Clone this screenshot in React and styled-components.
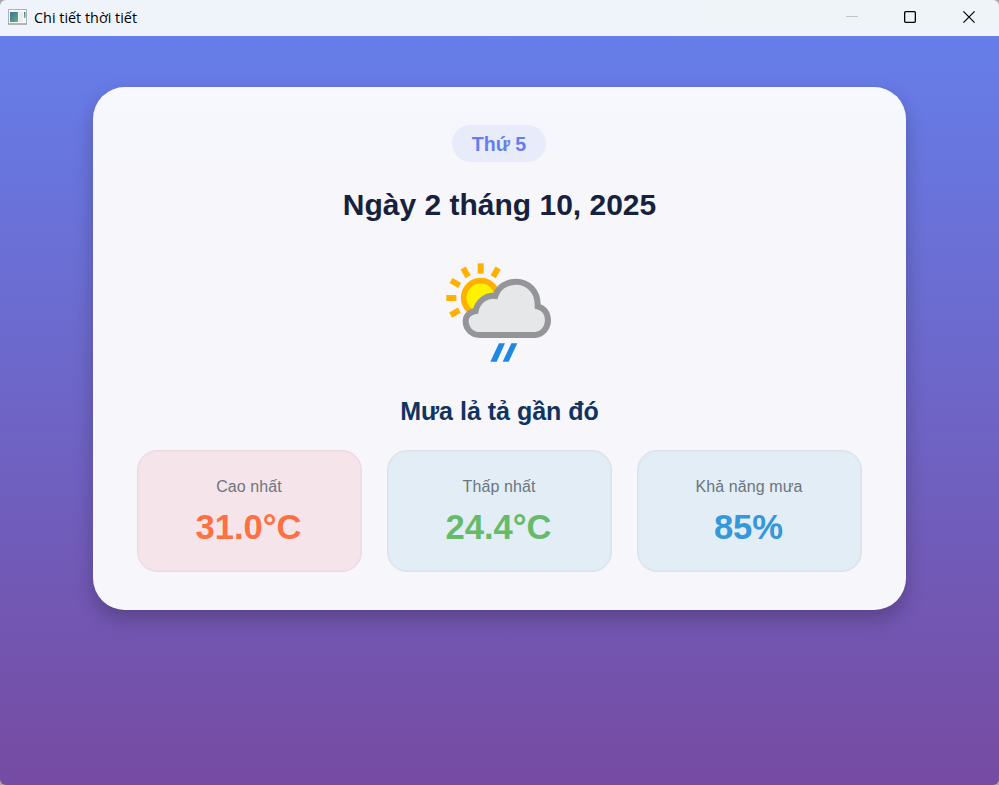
import React from "react";
import styled, { createGlobalStyle } from "styled-components";

const GlobalStyle = createGlobalStyle`
  * { box-sizing: border-box; }
  html, body { margin: 0; background: #a9a9ad; }
`;

const Window = styled.div`
  width: 999px;
  height: 785px;
  display: flex;
  flex-direction: column;
  overflow: hidden;
  border-radius: 6px;
  font-family: "Liberation Sans", Arial, sans-serif;
`;

const TitleBar = styled.header`
  height: 36px;
  flex: none;
  display: flex;
  align-items: center;
  padding-left: 8px;
  background: linear-gradient(90deg, #eff3fb, #eef4f8);
`;

const Title = styled.span`
  flex: 1;
  margin: -1px 0 0 7px;
  font: 14.4px/20px "Open Sans", "Noto Sans", sans-serif;
  color: #000;
`;

const WindowButton = styled.button`
  width: ${(p) => p.$width || 58}px;
  height: 34px;
  margin-bottom: 2px;
  padding: 0;
  border: 0;
  background: none;
  display: grid;
  place-items: center;
  color: ${(p) => (p.$muted ? "#c1c5c8" : "#000")};
`;

const Body = styled.main`
  flex: 1;
  padding: 51px 93px 0;
  background: linear-gradient(#667eea, #764ba2);
`;

const Card = styled.section`
  height: 523px;
  padding: 38px 44px;
  border-radius: 32px;
  display: flex;
  flex-direction: column;
  align-items: center;
  background: linear-gradient(#f8f9ff, #f5f7fc 30px, #f6f7fc 65px, #f7f6fb 75px, #f7f7fb);
  box-shadow: 0 9px 20px rgba(0, 0, 0, 0.23);
`;

const DayBadge = styled.div`
  width: 94px;
  height: 37px;
  margin-right: 1px;
  border-radius: 19px;
  background: #e8ebf9;
  color: #667eea;
  font-size: 19.6px;
  font-weight: 700;
  line-height: 38px;
  text-align: center;
`;

const DateHeading = styled.h1`
  margin: 25px 0 0;
  font-size: 30px;
  line-height: 36px;
  font-weight: 700;
  color: #16213e;
  white-space: nowrap;
`;

const WeatherIcon = styled.svg`
  flex: none;
  width: 140px;
  height: 130px;
  margin-top: 27px;
  filter: blur(0.5px);
`;

const Condition = styled.h2`
  margin: 16px 0 0;
  font-size: 25px;
  line-height: 30px;
  font-weight: 700;
  color: #0f3460;
  white-space: nowrap;
`;

const Stats = styled.div`
  width: 725px;
  margin-top: 24px;
  display: grid;
  grid-template-columns: repeat(3, 225px);
  gap: 25px;
`;

const Stat = styled.div`
  height: 122px;
  padding: 27px 2px 0 0;
  border: 1px solid ${(p) => (p.$warm ? "#ecdae2" : "#d8e3eb")};
  box-shadow: inset 0 0 0 1px ${(p) => (p.$warm ? "#f1dfe6" : "#dde8f0")};
  border-radius: 20px;
  background: ${(p) => (p.$warm ? "#f5e4ea" : "#e2edf6")};
  text-align: center;
`;

const StatLabel = styled.div`
  padding-left: 1px;
  font-size: 16px;
  line-height: 18px;
  letter-spacing: 0.1px;
  color: #6c757d;
`;

const StatValue = styled.div`
  margin-top: 11px;
  font-size: 34.6px;
  line-height: 40px;
  font-weight: 700;
  color: ${(p) => p.$color};
`;

const stats = [
  { label: "Cao nhất", value: "31.0°C", color: "#ff7043", warm: true },
  { label: "Thấp nhất", value: "24.4°C", color: "#66bb6a" },
  { label: "Khả năng mưa", value: "85%", color: "#3498db" },
];

const AppIconSvg = styled.svg`
  flex: none;
  margin-bottom: 2px;
`;

const AppIcon = () => (
  <AppIconSvg width="19" height="16" viewBox="0 0 19 16">
    <defs>
      <linearGradient id="pane" x1="0" y1="0" x2="1" y2="1">
        <stop offset="0" stopColor="#3e6da0" />
        <stop offset="1" stopColor="#5fb57c" />
      </linearGradient>
      <linearGradient id="strip" x1="0" y1="0" x2="0" y2="1">
        <stop offset="0" stopColor="#4776b4" />
        <stop offset="1" stopColor="#67b98a" />
      </linearGradient>
    </defs>
    <rect x="0.5" y="0.5" width="18" height="14.5" fill="#f8f8f8" stroke="#aeb1b5" />
    <path d="M0 15H19" stroke="#92969a" />
    <rect x="2" y="3" width="8" height="10" fill="url(#pane)" />
    <rect x="11" y="3" width="4" height="10" fill="#ebecec" />
    <rect x="16" y="3" width="1.5" height="6" fill="url(#strip)" />
  </AppIconSvg>
);

const SunCloudRain = () => (
  <WeatherIcon viewBox="0 0 420 390">
    <g fill="#ffb000">
      <rect x="143" y="40" width="18" height="31" />
      <rect x="49" y="135" width="30" height="18" />
      <rect x="-9" y="-15" width="18" height="30" transform="translate(107 67) rotate(-30)" />
      <rect x="-9" y="-15" width="18" height="30" transform="translate(197 67) rotate(30)" />
      <rect x="-9" y="-15" width="18" height="30" transform="translate(76 99) rotate(-60)" />
      <rect x="-9" y="-15" width="18" height="30" transform="translate(75 188) rotate(60)" />
    </g>
    <circle cx="152" cy="143" r="51" fill="#fff200" stroke="#ffb000" strokeWidth="17" />
    <path
      d="M148 255H314A42 44 0 0 0 354 211C354 190 342 174 323 169C325 124 295 95 258 95C229 95 204 112 196 138C168 134 142 155 137 183C118 186 107 198 107 214A41 41 0 0 0 148 255Z"
      fill="#e6e7e8"
      stroke="#939598"
      strokeWidth="18"
    />
    <path d="M207 280H225L200 335H181ZM244 280H262L236 335H218Z" fill="#1e88e5" />
  </WeatherIcon>
);

export default function App() {
  return (
    <>
      <GlobalStyle />
      <Window>
        <TitleBar>
          <AppIcon />
          <Title>Chi tiết thời tiết</Title>
          <WindowButton $muted aria-label="Minimize">
            <svg width="12" height="12"><path d="M0 5.5H12" stroke="currentColor" /></svg>
          </WindowButton>
          <WindowButton aria-label="Maximize">
            <svg width="12" height="12" fill="none">
              <rect x="0.65" y="0.65" width="10.7" height="10.7" rx="1" stroke="currentColor" strokeWidth="1.3" />
            </svg>
          </WindowButton>
          <WindowButton $width={60} aria-label="Close">
            <svg width="12" height="12"><path d="M0.4 0.4L11.6 11.6M11.6 0.4L0.4 11.6" stroke="currentColor" strokeWidth="1.2" /></svg>
          </WindowButton>
        </TitleBar>
        <Body>
          <Card>
            <DayBadge>Thứ 5</DayBadge>
            <DateHeading>Ngày 2 tháng 10, 2025</DateHeading>
            <SunCloudRain />
            <Condition>Mưa lả tả gần đó</Condition>
            <Stats>
              {stats.map((s) => (
                <Stat key={s.label} $warm={s.warm}>
                  <StatLabel>{s.label}</StatLabel>
                  <StatValue $color={s.color}>{s.value}</StatValue>
                </Stat>
              ))}
            </Stats>
          </Card>
        </Body>
      </Window>
    </>
  );
}
